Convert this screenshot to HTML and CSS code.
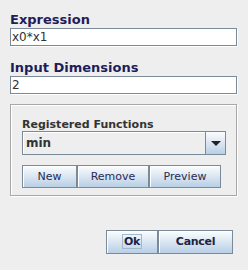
FILE: index.html
```html
<!DOCTYPE html>
<html lang="en">

<head>
    <meta charset="UTF-8">
    <title>Expression</title>
    <link rel="stylesheet" href="styles.css">
</head>

<body>
    <div id="dialog">
        <div class="title">Expression</div>
        <div class="field">x0*x1</div>
        <div class="title second">Input Dimensions</div>
        <div class="field">2</div>

        <div id="group">
            <div class="subTitle">Registered Functions</div>
            <div class="combo">
                <div class="comboText">min</div>
                <div class="comboArrow"><span class="tri"></span></div>
            </div>
            <div class="btnRow">
                <div class="btn w55">New</div>
                <div class="btn w72">Remove</div>
                <div class="btn w72">Preview</div>
            </div>
        </div>

        <div class="footer">
            <div class="btn bold w52"><span class="focus">Ok</span></div>
            <div class="btn bold w75">Cancel</div>
        </div>
    </div>
</body>

</html>
```

FILE: styles.css
```css
* {
    margin: 0;
    padding: 0;
    box-sizing: border-box;
}

body {
    width: 248px;
    height: 270px;
    background-color: #eeeeee;
    font-family: "DejaVu Sans", sans-serif;
    color: #333333;
    overflow: hidden;
}

#dialog {
    padding: 10px 11px 0 10px;
}

.title {
    height: 17px;
    font: bold 13px/17px "DejaVu Sans", sans-serif;
    color: #1e1d5c;
    padding-top: 1px;
}

.second {
    margin-top: 12px;
}

.field {
    margin-top: 1px;
    height: 18px;
    background-color: #ffffff;
    border: 1px solid #7a8a99;
    box-shadow: 1px 1px 0 #ffffff;
    font: 12px/16px "DejaVu Sans", sans-serif;
    padding-left: 1px;
    color: #333333;
}

#group {
    margin-top: 10px;
    height: 92px;
    border: 1px solid #a8a8a8;
    box-shadow: inset 1px 1px 0 #ffffff, 1px 1px 0 #ffffff;
    padding: 11px 10px 0 11px;
}

.subTitle {
    height: 15px;
    font: bold 11px/15px "DejaVu Sans", sans-serif;
    color: #333333;
    padding-top: 1px;
}

.combo {
    display: flex;
    width: 204px;
    height: 24px;
}

.comboText {
    flex: 1;
    border: 1px solid #7a8a99;
    box-shadow: inset 1px 1px 0 #ffffff;
    background-color: #eeeeee;
    font: bold 12px/22px "DejaVu Sans", sans-serif;
    padding-left: 3px;
}

.comboArrow {
    width: 20px;
    border: 1px solid #7a8a99;
    border-left: none;
    background: linear-gradient(#fbfdfe, #dde8f3 45%, #b8cfe5);
    display: flex;
    align-items: center;
    justify-content: center;
}

.tri {
    width: 0;
    height: 0;
    border-left: 5px solid transparent;
    border-right: 5px solid transparent;
    border-top: 5px solid #222222;
    margin-top: 1px;
}

.btnRow {
    display: flex;
    margin-top: 10px;
}

.btn {
    height: 23px;
    border: 1px solid #7a8a99;
    background: linear-gradient(#fbfdfe, #dde8f3 45%, #b8cfe5);
    box-shadow: inset 1px 1px 0 #ffffff;
    font: 11px/21px "DejaVu Sans", sans-serif;
    color: #2a2a55;
    text-align: center;
}

.w55 { width: 55px; }
.w72 { width: 72px; }
.w52 { width: 52px; }
.w75 { width: 75px; }

.footer {
    display: flex;
    justify-content: flex-end;
    margin-top: 34px;
    padding-right: 4px;
}

.footer .btn {
    height: 24px;
    line-height: 22px;
}

.bold {
    font-weight: bold;
    color: #222244;
    letter-spacing: -0.3px;
}

.focus {
    border: 1px solid #a3b8cc;
    padding: 0 1px;
}
```
